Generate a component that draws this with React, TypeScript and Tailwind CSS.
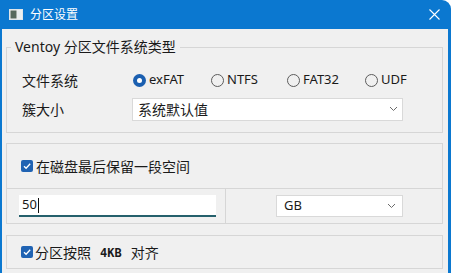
import React from 'react'

const FONT = { fontFamily: '"Noto Sans", "Noto Sans CJK SC", sans-serif' }

const RADIOS = [
  { label: 'exFAT', w: 'w-[77px]', on: true },
  { label: 'NTFS', w: 'w-[75px]', on: false },
  { label: 'FAT32', w: 'w-[77px]', on: false },
  { label: 'UDF', w: 'w-[60px]', on: false },
]

const Chevron = () => (
  <svg width="9" height="6" viewBox="0 0 9 6" className="shrink-0">
    <path d="M1 1 L4.5 4.5 L8 1" fill="none" stroke="#6b6b6b" strokeWidth="1" />
  </svg>
)

const Check = () => (
  <span className="w-[12px] h-[12px] rounded-[2px] bg-[#2063b3] flex items-center justify-center shrink-0">
    <svg width="10" height="10" viewBox="0 0 10 10">
      <path d="M2 5.2 L4.1 7.3 L8.2 2.8" fill="none" stroke="white" strokeWidth="1.3" />
    </svg>
  </span>
)

export default function App() {
  return (
    <div className="w-[451px] h-[273px] overflow-hidden bg-white" style={FONT}>
      <div className="w-[451px] h-[273px] bg-[#0b78d0] rounded-tr-[9px] flex flex-col">
        {/* Title bar */}
        <div className="h-[29px] shrink-0 flex items-center pl-[9px] pr-[11px]">
          <svg width="14" height="11" viewBox="0 0 14 11" className="shrink-0">
            <rect x="0.5" y="0.5" width="13" height="10" fill="#f2f2f2" stroke="#dfe6ea" />
            <rect x="1.5" y="1.5" width="6" height="8" fill="#566a5e" />
            <rect x="8" y="1.5" width="4.5" height="8" fill="#e8eef0" />
          </svg>
          <span className="ml-[7px] text-white text-[12px] leading-none">分区设置</span>
          <svg width="11" height="11" viewBox="0 0 11 11" className="ml-auto">
            <path d="M0.5 0.5 L10.5 10.5 M10.5 0.5 L0.5 10.5" stroke="white" strokeWidth="1.1" />
          </svg>
        </div>

        {/* Body */}
        <div className="flex-1 ml-[2px] mr-[3px] bg-[#f0f0f0] pl-[4px] pr-[5px] pt-[8px] text-[14px] text-[#1a1a1a]">
          <fieldset className="border border-[#d6d6d6] pb-[12px]">
            <legend className="ml-[4px] px-[4px] leading-[20px] text-[14px]">Ventoy 分区文件系统类型</legend>
            <div className="pl-[15px] pt-[12px] flex flex-col gap-[7px]">
              <div className="flex items-center h-[22px]">
                <span className="w-[110px]">文件系统</span>
                {RADIOS.map((r) => (
                  <label key={r.label} className={`${r.w} flex items-center gap-[3px] text-[13px] ml-[1px]`}>
                    {r.on ? (
                      <span className="w-[13px] h-[13px] rounded-full bg-[#1b5fb0] flex items-center justify-center">
                        <span className="w-[5px] h-[5px] rounded-full bg-white" />
                      </span>
                    ) : (
                      <span className="w-[13px] h-[13px] rounded-full border border-[#5c5c5c]" />
                    )}
                    <span>{r.label}</span>
                  </label>
                ))}
              </div>
              <div className="flex items-center h-[22px]">
                <span className="w-[110px]">簇大小</span>
                <div className="w-[271px] h-[23px] bg-white border border-[#d9d9d9] flex items-center pl-[5px] pr-[4px]">
                  <span className="text-[14px]">系统默认值</span>
                  <span className="ml-auto"><Chevron /></span>
                </div>
              </div>
            </div>
          </fieldset>

          {/* Reserve space */}
          <div className="mt-[10px] border border-[#d6d6d6]">
            <div className="h-[44px] flex items-center pl-[14px] gap-[3px]">
              <Check />
              <span>在磁盘最后保留一段空间</span>
            </div>
            <div className="h-[35px] grid grid-cols-[219px_1fr] border-t border-[#d6d6d6]">
              <div className="flex items-center pl-[12px] border-r border-[#d6d6d6]">
                <div className="w-[197px] h-[22px] bg-white border-b-2 border-[#25606c] flex items-center pl-[3px] text-[13px]">
                  50<span className="w-px h-[15px] bg-[#111] ml-[1px]" />
                </div>
              </div>
              <div className="flex items-center pl-[50px]">
                <div className="w-[127px] h-[22px] bg-white border border-[#d9d9d9] flex items-center pl-[7px] pr-[6px] text-[13px]">
                  GB
                  <span className="ml-auto"><Chevron /></span>
                </div>
              </div>
            </div>
          </div>

          {/* Align */}
          <div className="mt-[11px] border border-[#d6d6d6] h-[34px] flex items-center pl-[14px] gap-[2px]">
            <Check />
            <span>分区按照</span>
            <span
              className="ml-[7px] text-[12px] leading-none pt-[2px] font-bold"
              style={{ fontFamily: '"DejaVu Sans Mono", monospace' }}
            >
              4KB
            </span>
            <span className="ml-[7px]">对齐</span>
          </div>
        </div>
      </div>
    </div>
  )
}
